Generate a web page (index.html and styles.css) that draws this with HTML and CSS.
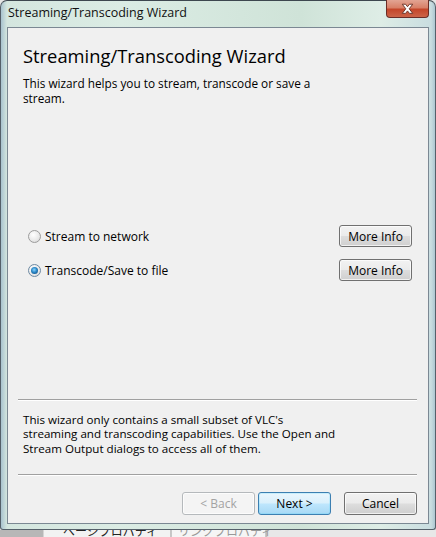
FILE: index.html
```html
<!DOCTYPE html>
<html lang="en">
<head>
<meta charset="utf-8">
<title>Streaming/Transcoding Wizard</title>
<link rel="stylesheet" href="styles.css">
</head>
<body>
<div class="window">
  <div class="titlebar">
    <span class="title">Streaming/Transcoding Wizard</span>
    <span class="close" aria-label="Close">
      <svg width="43" height="18" viewBox="0 0 43 18">
        <path d="M16 4 L19.5 4 L21.5 6.6 L23.5 4 L27 4 L23.3 8.8 L27 13.6 L23.5 13.6 L21.5 11 L19.5 13.6 L16 13.6 L19.7 8.8 Z" fill="#ffffff" stroke="#6a3328" stroke-width="1" stroke-linejoin="round"/>
      </svg>
    </span>
  </div>
  <div class="panel">
    <h1 class="heading">Streaming/Transcoding Wizard</h1>
    <p class="intro">This wizard helps you to stream, transcode or save a<br>stream.</p>
    <div class="options">
      <div class="option">
        <label class="choice"><span class="radio"></span>Stream to network</label>
        <button class="btn info">More Info</button>
      </div>
      <div class="option">
        <label class="choice"><span class="radio checked"></span>Transcode/Save to file</label>
        <button class="btn info">More Info</button>
      </div>
    </div>
    <div class="spacer"></div>
    <div class="sep"></div>
    <p class="note">This wizard only contains a small subset of VLC's<br>streaming and transcoding capabilities. Use the Open and<br>Stream Output dialogs to access all of them.</p>
    <div class="sep"></div>
    <div class="actions">
      <button class="btn nav disabled">&lt; Back</button>
      <button class="btn nav default">Next &gt;</button>
      <button class="btn nav cancel">Cancel</button>
    </div>
  </div>
</div>
<div class="behind">
  <span class="tab first">ページプロパティ</span>
  <span class="tab second">リンクプロパティ</span>
</div>
</body>
</html>
```
FILE: styles.css
```css
html, body {
  margin: 0;
  padding: 0;
}
body {
  width: 436px;
  height: 537px;
  overflow: hidden;
  background: #e6e6e6;
  font-family: "Open Sans", "Noto Sans", "Noto Sans CJK JP", sans-serif;
  font-size: 12px;
  color: #000;
}
.window {
  height: 530px;
  box-sizing: border-box;
  border: 1px solid #55606a;
  border-top-color: #3d474f;
  border-radius: 7px 7px 3px 3px;
  background: linear-gradient(90deg, #a9c3cf 0px, #d4e6df 6px, #dbece4 120px, #cfe3d8 300px, #deede6 380px, #c9dde0 430px, #9fbcca 436px);
  display: flex;
  flex-direction: column;
}
.titlebar {
  height: 26px;
  display: flex;
  justify-content: space-between;
  align-items: flex-start;
  flex-shrink: 0;
}
.title {
  padding: 4px 0 0 7px;
  font-size: 12.5px;
  color: #111;
  line-height: 16px;
}
.close {
  width: 43px;
  height: 18px;
  margin: -1px 6px 0 0;
  border: 1px solid #6b2d26;
  border-top: none;
  border-radius: 0 0 4px 4px;
  background: linear-gradient(180deg, #e2a493 0%, #d88068 45%, #c4462a 55%, #cc6448 100%);
  box-sizing: border-box;
  display: flex;
}
.panel {
  flex: 1;
  margin: 0 6px 5px 6px;
  border: 1px solid #7b8893;
  background: #f0f0f0;
  display: flex;
  flex-direction: column;
  padding: 0 11px 8px 10px;
}
.heading {
  margin: 16px 0 0 5px;
  font-weight: normal;
  font-size: 18.35px;
  line-height: 24px;
  color: #000;
}
.intro {
  margin: 8px 0 0 5px;
  line-height: 14.5px;
  font-size: 11.8px;
}
.options {
  margin-top: 120px;
  display: flex;
  flex-direction: column;
  gap: 12px;
}
.option {
  display: flex;
  align-items: center;
  justify-content: space-between;
  padding: 0 5px 0 10px;
}
.choice {
  display: flex;
  align-items: center;
  gap: 4px;
  font-size: 12px;
}
.radio {
  width: 11px;
  height: 11px;
  border-radius: 50%;
  border: 1px solid #9c9c9c;
  background: radial-gradient(circle at 40% 35%, #ffffff 0%, #e8e8e8 60%, #cfcfcf 100%);
  position: relative;
}
.radio.checked {
  border-color: #6e8aa3;
}
.radio.checked::after {
  content: "";
  position: absolute;
  left: 2px;
  top: 2px;
  width: 7px;
  height: 7px;
  border-radius: 50%;
  background: radial-gradient(circle at 45% 40%, #8ad6ff 0%, #2a86c6 45%, #0c3f70 100%);
}
.btn {
  font-family: inherit;
  font-size: 12px;
  color: #000;
  border: 1px solid #707070;
  border-radius: 3px;
  background: linear-gradient(180deg, #f2f2f2 0%, #ebebeb 48%, #dddddd 52%, #cfcfcf 100%);
  padding: 0;
  box-shadow: inset 0 0 0 1px rgba(255,255,255,0.7);
}
.info {
  width: 73px;
  height: 22px;
}
.spacer {
  flex: 1;
}
.sep {
  height: 1px;
  background: #a0a0a0;
  border-bottom: 1px solid #ffffff;
}
.note {
  margin: 12px 0 18px 5px;
  line-height: 14.5px;
  font-size: 11.6px;
}
.actions {
  margin-top: 16px;
  display: flex;
  justify-content: flex-end;
  gap: 3px;
}
.nav {
  width: 73px;
  height: 23px;
}
.disabled {
  color: #a3a3a3;
  border-color: #b5b9bc;
  background: #f4f4f4;
}
.default {
  border-color: #3c7fb1;
  background: linear-gradient(180deg, #eaf6fd 0%, #d9f0fc 48%, #bee6fd 52%, #a7d9f5 100%);
  box-shadow: inset 0 0 0 1px #48d2fb33;
}
.cancel {
  margin-left: 10px;
}
.behind {
  height: 7px;
  position: relative;
  overflow: hidden;
  background: linear-gradient(90deg, #b7b7b7 0, #b7b7b7 43px, #f2f2f2 44px, #f2f2f2 170px, #9a9a9a 171px, #f5f5f5 172px, #f5f5f5 265px, #9a9a9a 266px, #e8e8e8 267px);
}
.tab {
  position: absolute;
  top: -5px;
  font-size: 12px;
  line-height: 14px;
}
.tab.first {
  left: 63px;
  color: #222;
}
.tab.second {
  left: 178px;
  color: #999;
}
```
